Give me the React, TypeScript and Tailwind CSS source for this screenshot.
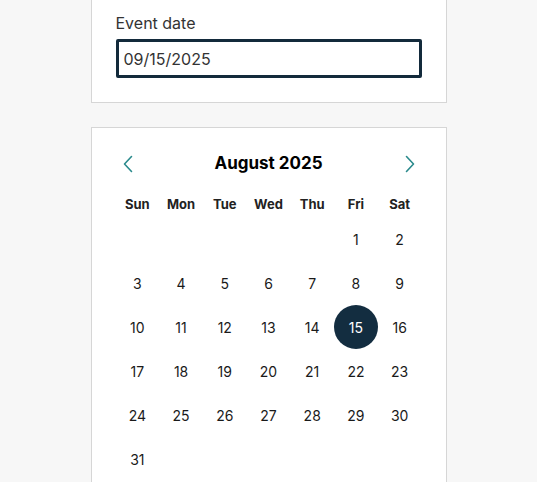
const days: (number | null)[] = [
  null, null, null, null, null, 1, 2,
  3, 4, 5, 6, 7, 8, 9,
  10, 11, 12, 13, 14, 15, 16,
  17, 18, 19, 20, 21, 22, 23,
  24, 25, 26, 27, 28, 29, 30,
  31,
];

const weekdays = ["Sun", "Mon", "Tue", "Wed", "Thu", "Fri", "Sat"];

function Chevron({ dir }: { dir: "left" | "right" }) {
  return (
    <svg width="10" height="18" viewBox="0 0 10 18" fill="none">
      <path
        d={dir === "left" ? "M8.5 1.5 1.5 9l7 7.5" : "M1.5 1.5 8.5 9l-7 7.5"}
        stroke="#2a8a8c"
        strokeWidth="1.6"
        strokeLinecap="round"
        strokeLinejoin="round"
      />
    </svg>
  );
}

export default function App() {
  const selected = 15;

  return (
    <div
      className="min-h-[482px] bg-[#f7f7f7] overflow-hidden"
      style={{ fontFamily: "Inter, 'Noto Sans', sans-serif" }}
    >
      <div className="mx-auto w-[356px] space-y-6">
        {/* date field */}
        <div className="-mt-[14px] border border-[#d6d6d6] bg-white px-6 pt-6 pb-6">
          <label className="block text-[16px] leading-6 text-[#333]">Event date</label>
          <div className="mt-1 flex h-[39px] items-center rounded-[2px] border-[3px] border-[#132a3b] px-[5px] text-[16px] text-[#333]">
            09/15/2025
          </div>
        </div>

        {/* calendar */}
        <div className="border border-[#d6d6d6] bg-white px-6 pt-6 pb-6">
          <div className="flex h-6 items-center justify-between">
            <button className="flex h-6 w-6 items-center justify-center">
              <Chevron dir="left" />
            </button>
            <span className="text-[17px] font-bold text-black">August 2025</span>
            <button className="flex h-6 w-6 items-center justify-center">
              <Chevron dir="right" />
            </button>
          </div>

          <div className="mt-4 grid grid-cols-7">
            {weekdays.map((d) => (
              <div
                key={d}
                className="flex h-[25px] items-center justify-center text-[13px] font-bold text-[#222]"
              >
                {d}
              </div>
            ))}
          </div>

          <div className="grid grid-cols-7">
            {days.map((d, i) => (
              <div key={i} className="flex h-11 items-center justify-center">
                {d !== null && (
                  <span
                    className={
                      d === selected
                        ? "flex h-11 w-11 items-center justify-center rounded-full bg-[#132d40] text-[14px] text-white"
                        : "text-[14px] text-[#1a1a1a]"
                    }
                  >
                    {d}
                  </span>
                )}
              </div>
            ))}
          </div>
        </div>
      </div>
    </div>
  );
}
